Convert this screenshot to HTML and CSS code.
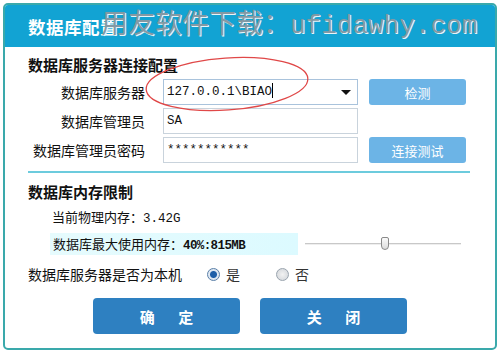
FILE: index.html
```html
<!DOCTYPE html>
<html lang="zh-CN">
<head>
	<meta charset="UTF-8">
	<title>数据库配置</title>
	<link rel="stylesheet" href="styles.css">
</head>
<body>
	<div id="dialog">
		<header class="head">
			<h1>数据库配置</h1>
			<p class="mark">用友软件下载：<span>ufidawhy.com</span></p>
		</header>
		<div class="content">
			<h2>数据库服务器连接配置</h2>
			<div class="row">
				<label>数据库服务器</label>
				<div class="field combo">127.0.0.1\BIAO<i class="caret"></i><b class="arrow"></b></div>
				<span class="btn light">检测</span>
			</div>
			<div class="row">
				<label>数据库管理员</label>
				<div class="field">SA</div>
			</div>
			<div class="row">
				<label>数据库管理员密码</label>
				<div class="field">***********</div>
				<span class="btn light">连接测试</span>
			</div>
			<div class="line"></div>
			<h2>数据库内存限制</h2>
			<p class="info">当前物理内存：<span class="num">3.42G</span></p>
			<div class="limit">
				<p class="hl">数据库最大使用内存：<span class="num b">40%:815MB</span></p>
				<div class="slider"><div class="track"></div><div class="thumb"></div></div>
			</div>
			<div class="local">
				<span>数据库服务器是否为本机</span>
				<span class="radio on"></span><span class="opt">是</span>
				<span class="radio off"></span><span class="opt">否</span>
			</div>
			<div class="foot">
				<span class="btn dark">确 定</span>
				<span class="btn dark">关 闭</span>
			</div>
		</div>
		<svg class="circle" width="180" height="70" viewBox="0 0 180 70">
			<ellipse cx="90" cy="35" rx="81" ry="26" fill="none" stroke="#e04848" stroke-width="1.3" transform="rotate(-4 90 35)"/>
		</svg>
	</div>
</body>
</html>
```

FILE: styles.css
```css
*{
	margin: 0;
	padding: 0;
	box-sizing: border-box;
}
body{
	width: 500px;
	height: 353px;
	background: #fff;
	font-family: "Noto Sans CJK SC", "Liberation Sans", sans-serif;
	color: #111;
	padding: 3px;
}
#dialog{
	position: relative;
	width: 494px;
	height: 347px;
	border: 2px solid #3aa9ab;
	border-radius: 5px;
	overflow: hidden;
}
#dialog .head{
	height: 42px;
	background-color: #12a3d3;
	display: flex;
	align-items: center;
	padding-left: 23px;
}
#dialog .head h1{
	font-size: 17.5px;
	font-weight: bold;
	color: #fff;
	letter-spacing: 0.5px;
	margin-top: 1px;
}
#dialog .mark{
	position: absolute;
	left: 96px;
	top: -3px;
	font-size: 27px;
	color: #8499a4;
	text-shadow: 1px 1px 0 #e8f4f8;
	white-space: nowrap;
}
#dialog .mark span{
	font-family: "Liberation Mono", "DejaVu Sans Mono", monospace;
	font-size: 26px;
}
#dialog .content{
	padding: 8px 0 0 23px;
}
#dialog h2{
	font-size: 15px;
	font-weight: bold;
	line-height: 20px;
	margin-bottom: 4px;
}
#dialog .row{
	display: flex;
	align-items: center;
	height: 26px;
	margin-bottom: 3px;
}
#dialog .row label{
	width: 117px;
	text-align: right;
	font-size: 14px;
	margin-right: 18px;
}
#dialog .field{
	position: relative;
	width: 195px;
	height: 26px;
	border: 1px solid #c9d3dc;
	font-family: "Liberation Mono", "DejaVu Sans Mono", monospace;
	font-size: 12.5px;
	line-height: 24px;
	padding-left: 3px;
	margin-right: 11px;
}
#dialog .combo{
	border-color: #a9c3dc;
}
#dialog .caret{
	display: inline-block;
	width: 1px;
	height: 15px;
	background: #000;
	vertical-align: -3px;
}
#dialog .arrow{
	position: absolute;
	right: 6px;
	top: 10px;
	border-left: 5px solid transparent;
	border-right: 5px solid transparent;
	border-top: 5px solid #111;
}
#dialog .btn{
	display: flex;
	align-items: center;
	justify-content: center;
	color: #fff;
	border-radius: 3px;
}
#dialog .btn.light{
	width: 97px;
	height: 26px;
	background-color: #6cb4e6;
	font-size: 13px;
}
#dialog .line{
	width: 442px;
	height: 2px;
	background-color: #6ccbdd;
	margin: 8px 0 9px;
}
#dialog .info{
	font-size: 13px;
	line-height: 20px;
	padding-left: 24px;
	margin-top: 5px;
}
#dialog .num{
	font-family: "Liberation Mono", "DejaVu Sans Mono", monospace;
	font-size: 12.5px;
}
#dialog .num.b{
	font-weight: bold;
	letter-spacing: -0.6px;
}
#dialog .limit{
	display: flex;
	align-items: center;
	margin-top: 4px;
}
#dialog .hl{
	width: 248px;
	height: 22px;
	line-height: 22px;
	margin-left: 22px;
	padding-left: 3px;
	font-size: 13px;
	background: linear-gradient(to right, #e6fbfd, #dcfaff);
}
#dialog .slider{
	position: relative;
	width: 156px;
	height: 22px;
	margin-left: 7px;
}
#dialog .track{
	position: absolute;
	left: 0;
	right: 0;
	top: 10px;
	height: 2px;
	background: #c8c8c8;
	border-bottom: 1px solid #eee;
}
#dialog .thumb{
	position: absolute;
	left: 76px;
	top: 4px;
	width: 8px;
	height: 13px;
	background: linear-gradient(#fafafa, #dcdcdc);
	border: 1px solid #8a8a8a;
	border-radius: 2px 2px 4px 4px;
}
#dialog .local{
	display: flex;
	align-items: center;
	height: 26px;
	margin-top: 6px;
	font-size: 14px;
}
#dialog .radio{
	width: 13px;
	height: 13px;
	border-radius: 50%;
	border: 1px solid #9aa4ae;
	background: radial-gradient(#f2f2f2, #cfd3d8);
	margin-left: 25px;
	margin-right: 6px;
}
#dialog .radio.off{
	margin-left: 36px;
}
#dialog .radio.on{
	background: radial-gradient(circle, #1f5fa8 0 3px, #dfe8f2 4px);
	border-color: #5a7fa8;
}
#dialog .opt{
	font-size: 14px;
	color: #333;
}
#dialog .foot{
	display: flex;
	gap: 20px;
	margin: 11px 0 0 65px;
}
#dialog .btn.dark{
	width: 147px;
	height: 36px;
	background-color: #2e80c1;
	font-size: 15px;
	font-weight: bold;
	word-spacing: 20px;
	border-radius: 4px;
}
#dialog .circle{
	position: absolute;
	left: 132px;
	top: 44px;
}
```
